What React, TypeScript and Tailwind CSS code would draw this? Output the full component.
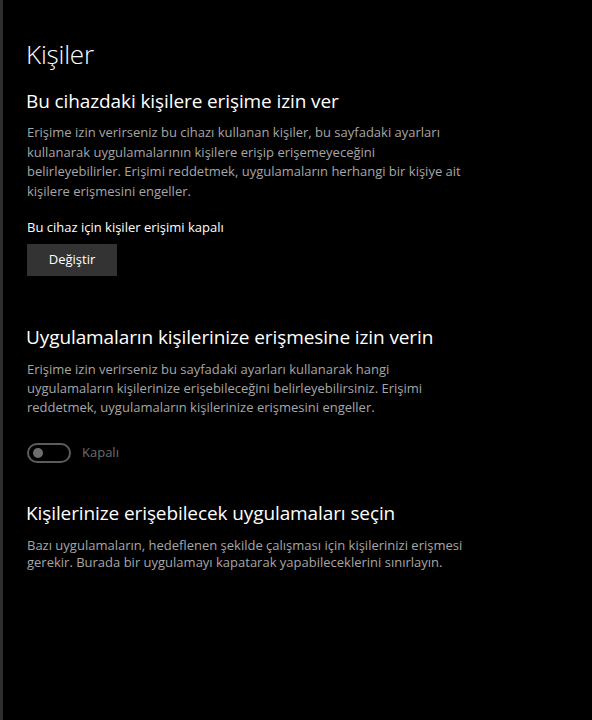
import React from "react";

const font = { fontFamily: '"Open Sans", "Noto Sans", sans-serif' };

function Lines({ lines, className }: { lines: string[]; className: string }) {
  return (
    <div className={className}>
      {lines.map((l, i) => (
        <div key={i} className="whitespace-nowrap">
          {l}
        </div>
      ))}
    </div>
  );
}

export default function App() {
  return (
    <div className="w-[592px] h-[720px] bg-black flex overflow-hidden" style={font}>
      <div className="w-[3px] h-full bg-[#2e2e2e] shrink-0" />
      <div className="flex flex-col pl-[23px] pt-[36px]">
        <h1 className="text-[26px] leading-[36px] text-white font-light tracking-[-0.2px]">Kişiler</h1>
        <h2 className="mt-[15px] text-[19px] leading-[28px] text-white tracking-[-0.1px]">
          Bu cihazdaki kişilere erişime izin ver
        </h2>
        <Lines
          className="mt-[8px] ml-[1px] text-[13px] leading-[19.5px] text-[#a6a6a6]"
          lines={[
            "Erişime izin verirseniz bu cihazı kullanan kişiler, bu sayfadaki ayarları",
            "kullanarak uygulamalarının kişilere erişip erişemeyeceğini",
            "belirleyebilirler. Erişimi reddetmek, uygulamaların herhangi bir kişiye ait",
            "kişilere erişmesini engeller.",
          ]}
        />
        <div className="mt-[16px] ml-[1px] text-[13px] leading-[20px] text-white">
          Bu cihaz için kişiler erişimi kapalı
        </div>
        <button className="mt-[7px] ml-[1px] w-[90px] h-[32px] bg-[#333333] text-white text-[13px]">
          Değiştir
        </button>
        <h2 className="mt-[47px] text-[19px] leading-[28px] text-white tracking-[-0.1px]">
          Uygulamaların kişilerinize erişmesine izin verin
        </h2>
        <Lines
          className="mt-[9px] ml-[1px] text-[13px] leading-[19px] text-[#a6a6a6]"
          lines={[
            "Erişime izin verirseniz bu sayfadaki ayarları kullanarak hangi",
            "uygulamaların kişilerinize erişebileceğini belirleyebilirsiniz. Erişimi",
            "reddetmek, uygulamaların kişilerinize erişmesini engeller.",
          ]}
        />
        <div className="mt-[26px] ml-[1px] flex items-center">
          <div className="w-[44px] h-[20px] rounded-full border-2 border-[#5c5c5c] flex items-center pl-[4px]">
            <div className="w-[10px] h-[10px] rounded-full bg-[#6e6e6e]" />
          </div>
          <span className="ml-[11px] text-[13px] text-[#6e6e6e]">Kapalı</span>
        </div>
        <h2 className="mt-[36px] text-[19px] leading-[28px] text-white tracking-[-0.1px]">
          Kişilerinize erişebilecek uygulamaları seçin
        </h2>
        <Lines
          className="mt-[10px] ml-[1px] text-[13px] leading-[17px] text-[#a6a6a6]"
          lines={[
            "Bazı uygulamaların, hedeflenen şekilde çalışması için kişilerinizi erişmesi",
            "gerekir. Burada bir uygulamayı kapatarak yapabileceklerini sınırlayın.",
          ]}
        />
      </div>
    </div>
  );
}
